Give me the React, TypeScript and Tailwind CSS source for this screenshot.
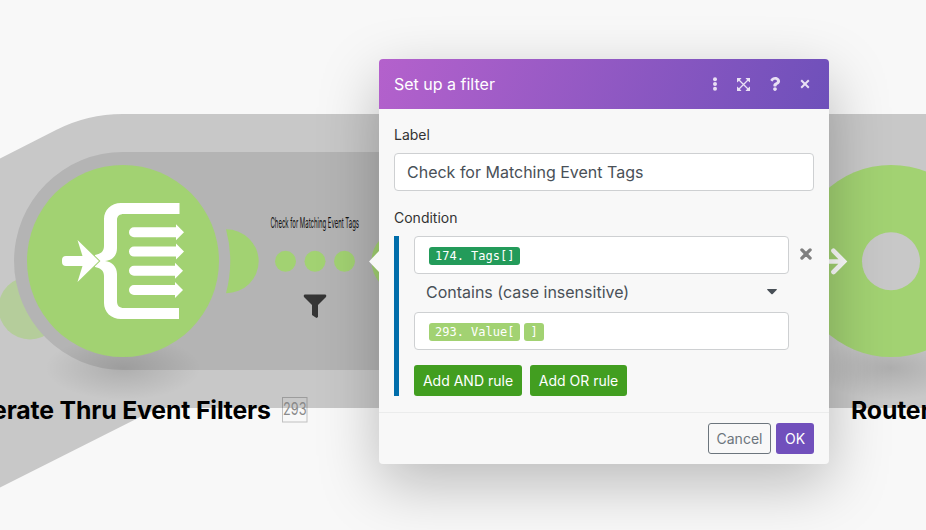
import React from "react";
import { FaQuestion } from "react-icons/fa";

const GREEN = "#a2d272";

function SmallArrow({ y, tip }: { y: number; tip: number }) {
  return <path d={`M134 ${y - 5}H${tip - 8}V${y - 8}L${tip} ${y}L${tip - 8} ${y + 8}V${y + 5}H134a5 5 0 0 1 0-10z`} fill="#fff" />;
}

function IteratorIcon() {
  return (
    <g>
      <path d="M179.500 203H121C111 203 104 210 104 219V246C104 252 100 254 95 255V267C100 268 104 270 104 276V303C104 312 111 319 121 319H179V308H124C119.500 308 117 306 117 301V274C117 267 112 261.500 105 261C112 260.500 117 256 117 248V220C117 216 119.500 214 124 214H179.500z" fill="#fff" />
      <path d="M66 256H82.500L77.500 240L99 261L77.500 282L82.500 266H66a4 4 0 0 1-4-4V260a4 4 0 0 1 4-4z" fill="#fff" stroke={GREEN} strokeWidth="2" paintOrder="stroke" />
      <SmallArrow y={232.3} tip={184} />
      <SmallArrow y={251.600} tip={184} />
      <SmallArrow y={270.800} tip={183} />
      <SmallArrow y={290} tip={183} />
    </g>
  );
}

function Scenario() {
  return (
    <svg className="absolute inset-0" width="926" height="530" viewBox="0 0 926 530" fontFamily="Inter, sans-serif">
      <defs>
        <radialGradient id="ground">
          <stop offset="0" stopColor="#000" stopOpacity="0.13" />
          <stop offset="0.5" stopColor="#000" stopOpacity="0.065" />
          <stop offset="1" stopColor="#000" stopOpacity="0" />
        </radialGradient>
      </defs>
      <path d="M0 158.500L56 130A147 147 0 0 1 123 114H926V408H158L0 487.500z" fill="#c8c8c8" />
      <circle cx="30" cy="308" r="31.500" fill="#b5cd9b" />
      <path d="M500 152H123A109 109 0 0 0 123 370H500z" fill="#b4b4b4" />
      <ellipse cx="123" cy="368" rx="78" ry="32" fill="url(#ground)" />
      <ellipse cx="891" cy="368" rx="78" ry="32" fill="url(#ground)" />
      <circle cx="123" cy="261" r="96" fill={GREEN} />
      <IteratorIcon />
      <path d="M226 229.300A32.700 32 0 0 1 226 293.300Q234.500 261 226 229.300z" fill={GREEN} />
      <circle cx="285.500" cy="261.300" r="10.500" fill={GREEN} />
      <circle cx="315" cy="261.300" r="10.500" fill={GREEN} />
      <circle cx="344.500" cy="261.300" r="10.500" fill={GREEN} />
      <circle cx="403.500" cy="261.300" r="32" fill={GREEN} />
      <text x="270.500" y="228" fontSize="14.200" fill="#111" textLength="88.500" lengthAdjust="spacingAndGlyphs">Check for Matching Event Tags</text>
      <path d="M304.500 294.500H325.500Q327 295.500 326 297L318 305V317L316.500 318L312 315V305L304 297Q303 295.500 304.500 294.500z" fill="#353535" />
      <circle cx="891" cy="261" r="96" fill={GREEN} />
      <circle cx="891" cy="261.300" r="29" fill="#c8c8c8" />
      <path d="M820 261.500H844M833.500 250.800L844 261.500L833.500 272" fill="none" stroke="#fff" strokeWidth="4.700" strokeLinecap="round" />
      <text x="270.800" y="419" fontSize="24.800" fontWeight="700" letterSpacing="-0.15" textAnchor="end">Iterate Thru Event Filters</text>
      <text x="851" y="419" fontSize="24.800" fontWeight="700" letterSpacing="-0.15">Router</text>
      <rect x="282.500" y="397.500" width="24.500" height="24.500" fill="none" stroke="#000" strokeOpacity="0.22" />
      <text x="283" y="415" fontSize="17" fill="#8a8a8a" textLength="23.500" lengthAdjust="spacingAndGlyphs">293</text>
    </svg>
  );
}

function Pill({ children, className }: { children: React.ReactNode; className: string }) {
  return (
    <span className={`flex h-[18px] items-center rounded-[3px] px-[6px] font-['DejaVu_Sans_Mono',monospace] text-[12px] leading-none text-white ${className}`}>
      {children}
    </span>
  );
}

const field = "flex h-[38px] items-center rounded border border-[#ced0d2] bg-white";
const ruleButton = "flex h-[31px] items-center justify-center whitespace-nowrap rounded-[3px] bg-[#429e20] text-[14px] text-white";

function FilterDialog() {
  return (
    <section className="absolute left-[379px] top-[59px] flex h-[405px] w-[450px] flex-col rounded bg-[#f8f8f8] shadow-[0_20px_60px_rgba(0,0,0,0.25)]">
      <header className="flex h-[50px] shrink-0 items-center rounded-t bg-[linear-gradient(110deg,#b461cc,#6e50ba)] pl-[15px] pr-[19px] text-white">
        <h1 className="flex-1 text-[16px]">Set up a filter</h1>
        <div className="flex items-center text-[#e9e0f4]">
          <svg width="6" height="14" viewBox="0 0 6 14" fill="currentColor" className="mr-[19px]">
            <circle cx="3" cy="2.200" r="2" />
            <circle cx="3" cy="7" r="2" />
            <circle cx="3" cy="11.800" r="2" />
          </svg>
          <svg width="13" height="13" viewBox="0 0 13 13" fill="currentColor" className="mr-[19px]">
            <path d="M1.500 1.500L11.500 11.500M11.500 1.500L1.500 11.500" stroke="currentColor" strokeWidth="1.300" />
            <path d="M0 0H4.500L3.300 1.500L1.500 3.300L0 4.500zM13 0V4.500L11.500 3.300L9.700 1.500L8.500 0zM13 13H8.500L9.700 11.500L11.500 9.700L13 8.500zM0 13V8.500L1.500 9.700L3.300 11.500L4.500 13z" />
          </svg>
          <FaQuestion className="mr-[19px] h-[14px] w-[12px]" />
          <svg width="10" height="10" viewBox="0 0 10 10">
            <path d="M1.200 1.200L8.800 8.800M8.800 1.200L1.200 8.800" stroke="currentColor" strokeWidth="2" />
          </svg>
        </div>
      </header>
      <main className="flex flex-1 flex-col px-[15px] pt-[16px]">
        <label className="text-[14px] leading-[20px] text-[#333]">Label</label>
        <div className={`${field} mt-[8px] px-3 text-[16px] text-[#495057]`}>Check for Matching Event Tags</div>
        <label className="mt-[17px] text-[14px] leading-[20px] text-[#333]">Condition</label>
        <div className="mt-[8px] flex h-[160px] border-l-[5px] border-[#006daa] pl-[15px]">
          <div className="flex w-[375px] flex-col">
            <div className={`${field} px-[14px] pt-[2px]`}>
              <Pill className="bg-[#239b5a]">174. Tags[]</Pill>
            </div>
            <div className="flex h-[38px] items-center justify-between pl-3 pr-[12px] text-[16px] text-[#495057]">
              <span className="pb-[2px]">Contains (case insensitive)</span>
              <svg width="10" height="6" viewBox="0 0 10 6" className="mb-[2px]"><path d="M.6 0H9.400Q10.300.3 9.600 1L5.700 5Q5 5.600 4.300 5L.4 1Q-.3.3.6 0z" fill="#495057" /></svg>
            </div>
            <div className={`${field} gap-1 px-[14px] pt-[2px]`}>
              <Pill className="bg-[#a2d272]">293. Value[</Pill>
              <Pill className="bg-[#a2d272]">]</Pill>
            </div>
            <div className="mt-[15px] flex gap-2">
              <button className={`${ruleButton} w-[108px]`}>Add AND rule</button>
              <button className={`${ruleButton} w-[97px]`}>Add OR rule</button>
            </div>
          </div>
          <svg width="12" height="12" viewBox="0 0 12 12" className="ml-[11px] mt-[12px]">
            <path d="M1.900 1.900L10.100 10.100M10.100 1.900L1.900 10.100" stroke="#808080" strokeWidth="3.300" strokeLinecap="round" />
          </svg>
        </div>
      </main>
      <footer className="flex h-[52px] shrink-0 items-center justify-end gap-[5px] border-t border-[#ebecec] px-[15px] text-[14px]">
        <button className="h-[31px] w-[63px] rounded-[3px] border border-[#6c757d] text-[#6c757d]">Cancel</button>
        <button className="h-[31px] w-[38px] rounded-[3px] bg-[#7150bc] text-white">OK</button>
      </footer>
    </section>
  );
}

export default function App() {
  return (
    <div className="relative h-[530px] w-[926px] overflow-hidden bg-[#f8f8f8] font-['Inter',sans-serif]">
      <Scenario />
      <FilterDialog />
      <svg className="absolute left-[369px] top-[251px]" width="10" height="21" viewBox="0 0 10 21"><path d="M10 0V21L0 10.500z" fill="#f8f8f8" /></svg>
    </div>
  );
}
